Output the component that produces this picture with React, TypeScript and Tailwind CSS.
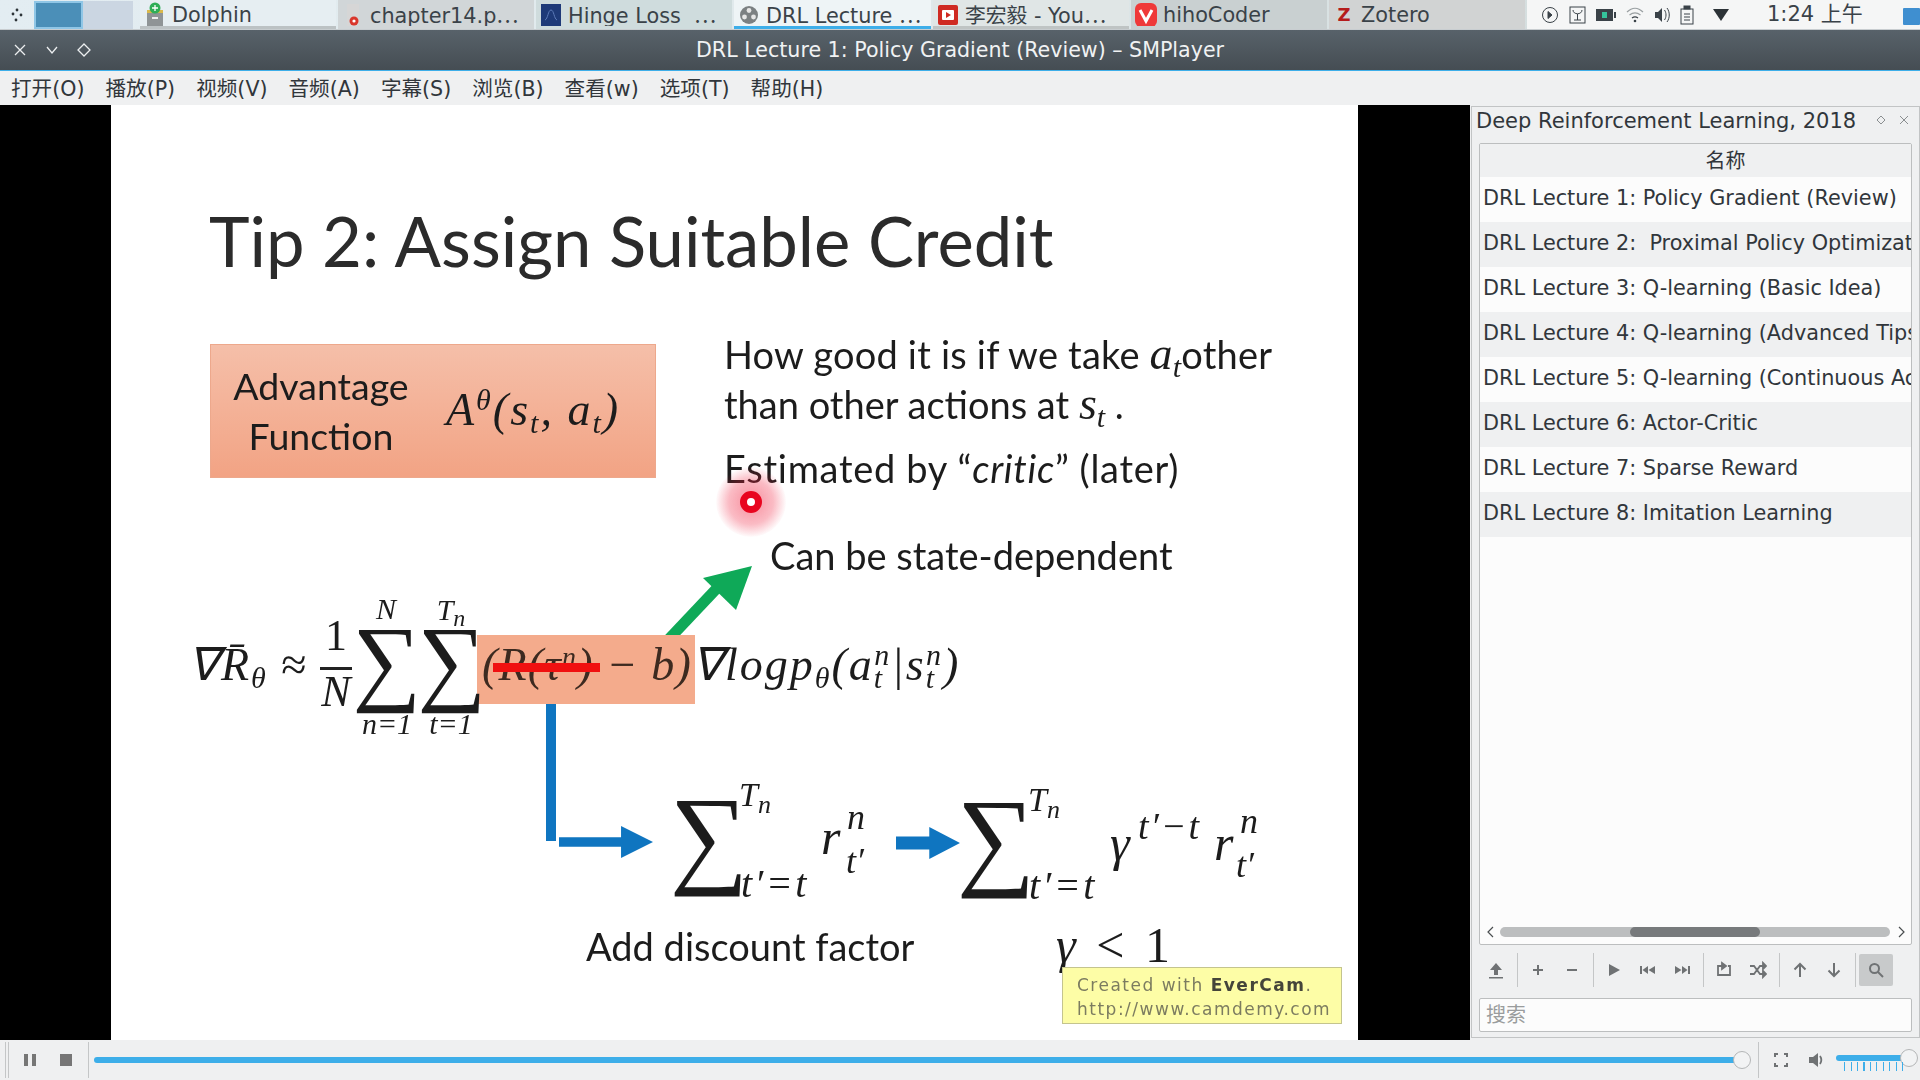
import React from "react";

const rows = [
  "DRL Lecture 1: Policy Gradient (Review)",
  "DRL Lecture 2:  Proximal Policy Optimization (PPO)",
  "DRL Lecture 3: Q-learning (Basic Idea)",
  "DRL Lecture 4: Q-learning (Advanced Tips)",
  "DRL Lecture 5: Q-learning (Continuous Action)",
  "DRL Lecture 6: Actor-Critic",
  "DRL Lecture 7: Sparse Reward",
  "DRL Lecture 8: Imitation Learning",
];
const menus = ["打开(O)", "播放(P)", "视频(V)", "音频(A)", "字幕(S)", "浏览(B)", "查看(w)", "选项(T)", "帮助(H)"];

function Tab({ w, bg, line, icon, text, dots }: { w: string; bg: string; line: string; icon: React.ReactNode; text: string; dots?: boolean }) {
  return (
    <div className={`${w} ${bg} h-[29px] mr-[2px] flex items-center relative overflow-hidden shrink-0`}>
      <div className="w-[30px] h-[24px] flex items-center justify-center shrink-0">{icon}</div>
      <span className="text-[20.800px] leading-[28px] whitespace-pre text-[#3a4248] ml-[2px]">
        {text}
        {dots ? <span className="font-['Noto_Sans_CJK_SC',sans-serif]">⋯</span> : null}
      </span>
      <div className={`absolute left-0 right-0 bottom-0 h-[3px] ${line}`} />
    </div>
  );
}

function Btn({ children, active }: { children: React.ReactNode; active?: boolean }) {
  return (
    <div className={`w-[34px] h-[32px] flex items-center justify-center rounded-[2px] ${active ? "bg-[#c8cacb]" : ""}`}>
      {children}
    </div>
  );
}
const Sep = () => <div className="w-px h-[34px] bg-[#c4c6c7] ml-[4px] mr-[3px]" />;

function Ico({ children, size = 18 }: { children: React.ReactNode; size?: number }) {
  return (
    <svg width={size} height={size} viewBox="0 0 18 18" fill="#6f7274" stroke="none">
      {children}
    </svg>
  );
}

const Arrow = ({ cls, d }: { cls: string; d: string }) => (
  <svg className={cls} viewBox="0 0 100 40" preserveAspectRatio="none">
    <path d={d} fill="#0f75c0" />
  </svg>
);

export default function App() {
  return (
    <div className="w-[1920px] h-[1080px] overflow-hidden flex flex-col bg-[#eff0f1] font-['DejaVu_Sans','Noto_Sans_CJK_SC',sans-serif]">
      {/* task bar */}
      <div className="h-[30px] flex items-start bg-gradient-to-r from-[#e3edf2] via-[#dfe8ea] to-[#cfd8d8] shrink-0 border-b border-[#c8cdd0]">
        <div className="w-[34px] h-[29px] flex items-center justify-center">
          <svg width="18" height="18" viewBox="0 0 18 18" fill="#2d3438">
            <circle cx="5" cy="8" r="1.4" />
            <circle cx="9" cy="4" r="1.4" />
            <circle cx="13" cy="9" r="1.4" />
            <circle cx="8" cy="14" r="1.4" />
          </svg>
        </div>
        <div className="w-[49px] h-[28px] bg-[#4b8fb8] border-2 border-[#8fc6e6] mt-[1px] shrink-0" />
        <div className="w-[50px] h-[28px] bg-[#cbd6e2] mt-[1px] shrink-0 mr-[7px]" />
        <Tab
          w="w-[196px]"
          bg="bg-[#e6eef2]"
          line="bg-[#bcc2c4]"
          text="Dolphin"
          icon={
            <svg width="20" height="26" viewBox="0 0 20 26">
              <rect x="2" y="9" width="16" height="16" fill="#8f9496" />
              <rect x="7" y="15" width="6" height="2" fill="#eee" />
              <rect x="2" y="8" width="16" height="3" fill="#d9b84a" />
              <circle cx="10" cy="6" r="5.5" fill="#2fae57" />
              <path d="M10 3v6M7 6h6" stroke="#fff" strokeWidth="1.3" />
            </svg>
          }
        />
        <Tab
          w="w-[196px]"
          bg="bg-[#d1d6d8]"
          line="bg-[#d1d6d8]"
          text="chapter14.p"
          dots
          icon={
            <svg width="20" height="26" viewBox="0 0 20 26">
              <rect x="4" y="2" width="12" height="22" fill="#d6d6d6" />
              <circle cx="11" cy="19" r="4.5" fill="#d9362b" />
              <circle cx="11" cy="19" r="1.6" fill="#fff" />
            </svg>
          }
        />
        <Tab
          w="w-[196px]"
          bg="bg-[#cfdcdd]"
          line="bg-[#cfdcdd]"
          text="Hinge Loss  "
          dots
          icon={
            <svg width="20" height="22" viewBox="0 0 20 22">
              <rect width="20" height="22" fill="#1e3a78" />
              <path d="M4 16c3-1 3-10 6-10s3 9 6 10" stroke="#5c7bb8" fill="none" />
            </svg>
          }
        />
        <Tab
          w="w-[197px]"
          bg="bg-[#eef4f6]"
          line="bg-[#3daee9]"
          text="DRL Lecture "
          dots
          icon={
            <svg width="20" height="20" viewBox="0 0 20 20">
              <circle cx="10" cy="10" r="9" fill="#7b8082" />
              <circle cx="10" cy="5.5" r="2.4" fill="#e6e6e6" />
              <circle cx="5.5" cy="12" r="2.4" fill="#e6e6e6" />
              <circle cx="14.5" cy="12" r="2.4" fill="#e6e6e6" />
            </svg>
          }
        />
        <Tab
          w="w-[196px]"
          bg="bg-[#e0e6e6]"
          line="bg-[#bfc4c4]"
          text="李宏毅 - You"
          dots
          icon={
            <svg width="20" height="20" viewBox="0 0 20 20">
              <rect width="20" height="20" rx="2" fill="#cf2a22" />
              <rect x="4" y="5" width="12" height="10" rx="1" fill="#fff" />
              <path d="M8 7l5 3-5 3z" fill="#cf2a22" />
            </svg>
          }
        />
        <Tab
          w="w-[196px]"
          bg="bg-[#c9d0d1]"
          line="bg-[#c9d0d1]"
          text="hihoCoder"
          icon={
            <svg width="22" height="24" viewBox="0 0 22 24">
              <rect width="22" height="24" rx="6" fill="#ef3939" />
              <path d="M5 7l6 11 6-11" stroke="#fff" strokeWidth="3" fill="none" />
            </svg>
          }
        />
        <Tab
          w="w-[196px]"
          bg="bg-[#d1d3d3]"
          line="bg-[#d1d3d3]"
          text="Zotero"
          icon={<span className="text-[18px] font-bold leading-none text-[#b51c1c]">Z</span>}
        />
        <div className="flex-1 h-[29px] bg-[#f5f6f6] flex items-center relative text-[#3a4248]">
          <div className="absolute left-[14px] top-[5px] flex gap-[10px] items-center">
            <svg width="18" height="18" viewBox="0 0 18 18" fill="none" stroke="#3a4248">
              <circle cx="9" cy="9" r="7.5" />
              <path d="M7 5.5l4 3.5-4 3.5z" fill="#3a4248" />
            </svg>
            <svg width="17" height="18" viewBox="0 0 17 18" fill="none" stroke="#3a4248">
              <rect x="1" y="1" width="15" height="16" />
              <path d="M4 4c0 5 9 5 9 0M8.500 8v6M5 14h7" />
            </svg>
            <svg width="20" height="16" viewBox="0 0 20 16">
              <rect x="0" y="2" width="17" height="12" fill="#3a4248" />
              <rect x="18" y="5" width="2" height="6" fill="#3a4248" />
              <rect x="6" y="5" width="5" height="6" fill="#35c49c" />
            </svg>
            <svg width="18" height="18" viewBox="0 0 18 18" fill="none" stroke="#9aa0a2" strokeWidth="1.2">
              <path d="M1 6c5-5 11-5 16 0M3.500 9c4-3 7-3 11 0" />
              <path d="M6 12c2-1.500 4-1.500 6 0" stroke="#3a4248" />
              <circle cx="9" cy="15" r="1.300" fill="#3a4248" stroke="none" />
            </svg>
            <svg width="16" height="20" viewBox="0 0 16 20" fill="#3a4248">
              <path d="M1 7h3l4-4v14l-4-4H1z" />
              <path d="M10.500 5c2 3 2 7 0 10M13 3c3 4 3 10 0 14" fill="none" stroke="#3a4248" />
            </svg>
            <svg width="14" height="20" viewBox="0 0 14 20" fill="none" stroke="#3a4248">
              <rect x="1" y="4" width="12" height="15" />
              <rect x="4" y="1" width="6" height="3" fill="#3a4248" />
              <path d="M4 9h6M4 12h6M4 15h6" />
            </svg>
            <svg className="ml-[9px]" width="16" height="12" viewBox="0 0 16 12" fill="#2c3337">
              <path d="M0 0h16L8 12z" />
            </svg>
          </div>
          <span className="absolute left-[240px] top-0 text-[21px] leading-[29px] whitespace-nowrap">1:24 上午</span>
          <div className="absolute right-0 top-[8px] w-[17px] h-[17px] bg-[#3f8fd0] rounded-[1px]" />
        </div>
      </div>

      {/* title bar */}
      <div className="h-[41px] shrink-0 bg-gradient-to-b from-[#58626a] to-[#454d53] border-b border-[#3daee9] flex items-center relative">
        <div className="flex items-center gap-[18px] pl-[13px] text-[#eceff0]">
          <svg width="14" height="14" viewBox="0 0 14 14" stroke="#eceff0" strokeWidth="1.300">
            <path d="M2 2l10 10M12 2L2 12" />
          </svg>
          <svg width="14" height="14" viewBox="0 0 14 14" stroke="#eceff0" strokeWidth="1.300" fill="none">
            <path d="M2 4l5 6 5-6" />
          </svg>
          <svg width="14" height="14" viewBox="0 0 14 14" stroke="#eceff0" strokeWidth="1.300" fill="none">
            <path d="M7 1l6 6-6 6-6-6z" />
          </svg>
        </div>
        <div className="absolute inset-0 flex items-center justify-center pt-px text-[#f0f2f3] text-[20.600px] leading-none whitespace-nowrap">
          DRL Lecture 1: Policy Gradient (Review) – SMPlayer
        </div>
      </div>

      {/* menu */}
      <div className="h-[34px] shrink-0 flex items-center pl-[11px] pt-[2px] gap-[21px] text-[20.600px] text-[#31363b] whitespace-nowrap">
        {menus.map((m) => (
          <span key={m}>{m}</span>
        ))}
      </div>

      {/* main */}
      <div className="h-[935px] shrink-0 flex">
        <div className="w-[1470px] h-full bg-black pl-[111px] pr-[112px] shrink-0">
          <div className="w-[1247px] h-full bg-white relative overflow-hidden">
            <div className="absolute left-[-111px] top-[-105px] w-[1470px] h-[1040px] blur-[0.6px] text-[#1c1c1c] font-['Lato',sans-serif]">
              <div className="absolute left-[209px] top-[197px] text-[68.800px] leading-[88px] whitespace-nowrap text-[#2b2b2b]">
                Tip 2: Assign Suitable Credit
              </div>

              {/* advantage box */}
              <div className="absolute left-[210px] top-[344px] w-[446px] h-[134px] bg-gradient-to-b from-[#f5bfa9] to-[#f2a384] border border-[#eda88c]" />
              <div className="absolute left-[231px] top-[361px] w-[180px] text-center text-[37.500px] leading-[50px]">
                Advantage
                <br />
                Function
              </div>
              <div className="absolute left-[446px] top-[385px] text-[46px] leading-[50px] italic tracking-[2px] whitespace-nowrap font-['Liberation_Serif',serif]">
                A<sup className="text-[30px]">θ</sup>(s<sub className="text-[30px]">t</sub>, a<sub className="text-[30px]">t</sub>)
              </div>

              <div className="absolute left-[724px] top-[329px] text-[38px] leading-[50px] tracking-[0.2px] whitespace-nowrap">
                How good it is if we take <i className="text-[46px] leading-[50px] font-['Liberation_Serif',serif]">a<sub className="text-[30px]">t</sub></i>other
              </div>
              <div className="absolute left-[724px] top-[379px] text-[38px] leading-[50px] whitespace-nowrap">
                than other actions at <i className="text-[46px] leading-[50px] font-['Liberation_Serif',serif]">s<sub className="text-[30px]">t</sub></i> .
              </div>
              <div className="absolute left-[724px] top-[443px] text-[38px] leading-[50px] tracking-[0.7px] whitespace-nowrap">
                Estimated by “<i>critic</i>” (later)
              </div>
              <div className="absolute left-[770px] top-[530px] text-[38px] leading-[50px] whitespace-nowrap">
                Can be state-dependent
              </div>

              {/* green arrow */}
              <svg className="absolute left-[660px] top-[560px] w-[100px] h-[85px]" viewBox="0 0 100 85">
                <path d="M8 80L60 25" stroke="#0fa958" strokeWidth="11" />
                <path d="M92 6L43 18L76 50Z" fill="#0fa958" />
              </svg>

              {/* formula */}
              <div className="absolute left-[477px] top-[635px] w-[218px] h-[69px] bg-[#f4ab8c]" />
              <div className="absolute left-[188px] top-[640px] text-[46px] leading-[50px] italic tracking-[2px] whitespace-nowrap font-['Liberation_Serif',serif]">
                ∇R̄<sub className="text-[30px]">θ</sub> <span className="not-italic">≈</span>
              </div>
              <div className="absolute left-[318px] top-[614px] w-[36px] text-center text-[44px] leading-[44px] font-['Liberation_Serif',serif]">1</div>
              <div className="absolute left-[320px] top-[667px] w-[32px] h-[3px] bg-[#222]" />
              <div className="absolute left-[318px] top-[670px] w-[36px] text-center text-[44px] leading-[44px] italic font-['Liberation_Serif',serif]">N</div>
              <div className="absolute left-[347px] top-[606px] w-[80px] text-center text-[96px] leading-[110px] font-['Liberation_Serif',serif]">∑</div>
              <div className="absolute left-[412px] top-[606px] w-[80px] text-center text-[96px] leading-[110px] font-['Liberation_Serif',serif]">∑</div>
              <div className="absolute left-[366px] top-[593px] w-[40px] text-center text-[30px] leading-[32px] italic font-['Liberation_Serif',serif]">N</div>
              <div className="absolute left-[431px] top-[594px] w-[40px] text-center text-[30px] leading-[32px] italic font-['Liberation_Serif',serif]">
                T<sub className="text-[24px]">n</sub>
              </div>
              <div className="absolute left-[355px] top-[708px] w-[64px] text-center text-[30px] leading-[32px] italic whitespace-nowrap font-['Liberation_Serif',serif]">n=1</div>
              <div className="absolute left-[421px] top-[708px] w-[60px] text-center text-[30px] leading-[32px] italic whitespace-nowrap font-['Liberation_Serif',serif]">t=1</div>
              <div className="absolute left-[482px] top-[640px] text-[46px] leading-[50px] italic tracking-[1.200px] whitespace-nowrap text-[#3d2a20] font-['Liberation_Serif',serif]">
                (R(τ<sup className="text-[28px]">n</sup>) − b)
              </div>
              <div className="absolute left-[493px] top-[663px] w-[107px] h-[9px] bg-[#f01010]" />
              <div className="absolute left-[692px] top-[640px] text-[46px] leading-[50px] italic tracking-[2px] whitespace-nowrap font-['Liberation_Serif',serif]">
                ∇logp<sub className="text-[30px]">θ</sub>(a<sub className="text-[30px]">t</sub>
                <sup className="text-[30px] -ml-[10px]">n</sup>|s<sub className="text-[30px]">t</sub>
                <sup className="text-[30px] -ml-[10px]">n</sup>)
              </div>

              {/* blue connector */}
              <div className="absolute left-[546px] top-[704px] w-[10px] h-[137px] bg-[#0f75c0]" />
              <Arrow cls="absolute left-[559px] top-[826px] w-[94px] h-[32px]" d="M0 14H66V0L100 20L66 40V26H0Z" />
              <Arrow cls="absolute left-[896px] top-[827px] w-[64px] h-[32px]" d="M0 12H52V0L100 20L52 40V28H0Z" />

              <div className="absolute left-[664px] top-[774px] w-[90px] text-center text-[110px] leading-[124px] font-['Liberation_Serif',serif]">∑</div>
              <div className="absolute left-[739px] top-[778px] text-[34px] leading-[34px] italic font-['Liberation_Serif',serif]">
                T<sub className="text-[26px]">n</sub>
              </div>
              <div className="absolute left-[741px] top-[866px] text-[40px] leading-[36px] italic tracking-[2.500px] whitespace-nowrap font-['Liberation_Serif',serif]">t′=t</div>
              <div className="absolute left-[821px] top-[814px] text-[50px] leading-[46px] italic font-['Liberation_Serif',serif]">r</div>
              <div className="absolute left-[847px] top-[800px] text-[36px] leading-[34px] italic font-['Liberation_Serif',serif]">n</div>
              <div className="absolute left-[846px] top-[844px] text-[36px] leading-[34px] italic font-['Liberation_Serif',serif]">t′</div>

              <div className="absolute left-[951px] top-[776px] w-[90px] text-center text-[110px] leading-[124px] font-['Liberation_Serif',serif]">∑</div>
              <div className="absolute left-[1028px] top-[783px] text-[34px] leading-[34px] italic font-['Liberation_Serif',serif]">
                T<sub className="text-[26px]">n</sub>
              </div>
              <div className="absolute left-[1029px] top-[868px] text-[40px] leading-[36px] italic tracking-[2.500px] whitespace-nowrap font-['Liberation_Serif',serif]">t′=t</div>
              <div className="absolute left-[1110px] top-[820px] text-[50px] leading-[46px] italic font-['Liberation_Serif',serif]">γ</div>
              <div className="absolute left-[1138px] top-[808px] text-[38px] leading-[36px] italic tracking-[2px] whitespace-nowrap font-['Liberation_Serif',serif]">t′−t</div>
              <div className="absolute left-[1214px] top-[820px] text-[50px] leading-[46px] italic font-['Liberation_Serif',serif]">r</div>
              <div className="absolute left-[1240px] top-[804px] text-[36px] leading-[34px] italic font-['Liberation_Serif',serif]">n</div>
              <div className="absolute left-[1236px] top-[848px] text-[36px] leading-[34px] italic font-['Liberation_Serif',serif]">t′</div>

              <div className="absolute left-[586px] top-[921px] text-[38px] leading-[50px] whitespace-nowrap">Add discount factor</div>
              <div className="absolute left-[1056px] top-[920px] text-[50px] leading-[50px] tracking-[4px] whitespace-nowrap font-['Liberation_Serif',serif]">
                <i>γ</i> &lt; 1
              </div>

              {/* watermark */}
              <div className="absolute left-[1062px] top-[967px] w-[280px] h-[57px] bg-[#fdfda6] border border-[#c4c48e] pl-[14px] pt-[5px] text-[17px] leading-[24px] tracking-[1.500px] text-[#7c7c60] whitespace-nowrap font-['DejaVu_Sans',sans-serif]">
                Created with <b className="text-[#45453a]">EverCam</b>.
                <br />
                http://www.camdemy.com
              </div>

              {/* pointer */}
              <div className="absolute left-[716px] top-[467px] w-[70px] h-[70px] rounded-full bg-[radial-gradient(circle,rgba(240,30,60,0.5)_0%,rgba(240,30,60,0.3)_45%,rgba(240,30,60,0)_72%)]" />
              <div className="absolute left-[740px] top-[491px] w-[22px] h-[22px] rounded-full border-[7px] border-[#e8051f] bg-white" />
            </div>
          </div>
        </div>

        {/* dock */}
        <div className="flex-1 mt-[1px] mb-[2px] ml-px mr-0 border border-[#c2c4c5] flex flex-col px-[7px] min-w-0">
          <div className="h-[35px] shrink-0 relative -ml-px -mt-[3px] flex items-center text-[21px] text-[#31363b] whitespace-nowrap">
            <span className="-ml-[2px]">Deep Reinforcement Learning, 2018</span>
            <svg className="absolute left-[398px] top-[11px]" width="10" height="10" viewBox="0 0 10 10" fill="none" stroke="#8a8e90">
              <path d="M5 1l4 4-4 4-4-4z" />
            </svg>
            <svg className="absolute left-[421px] top-[11px]" width="10" height="10" viewBox="0 0 10 10" stroke="#8a8e90">
              <path d="M1 1l8 8M9 1l-8 8" />
            </svg>
          </div>
          <div className="h-[802px] shrink-0 mt-[4px] border border-[#bcbebf] rounded-[2px] bg-[#fcfcfc] flex flex-col overflow-hidden">
            <div className="h-[34px] shrink-0 bg-[#eff0f1] border-b border-[#d4d6d7] flex items-center justify-center pl-[60px] text-[20px] text-[#31363b]">名称</div>
            <div className="flex-1 overflow-hidden -mt-px">
              {rows.map((r, i) => (
                <div
                  key={r}
                  className={`h-[45px] flex items-center pl-[3px] text-[20.800px] text-[#31363b] whitespace-pre ${i % 2 === 1 ? "bg-[#eff0f1]" : "bg-[#fcfcfc]"}`}
                >
                  <span className="-translate-y-px">{r}</span>
                </div>
              ))}
            </div>
            <div className="h-[14px] shrink-0 flex items-center relative mb-[5px]">
              <svg className="ml-[6px]" width="10" height="12" viewBox="0 0 10 12" fill="none" stroke="#4a4e50" strokeWidth="1.200">
                <path d="M7 1L2 6l5 5" />
              </svg>
              <div className="ml-[4px] w-[390px] h-[10px] rounded-full bg-[#bcbebf] relative">
                <div className="absolute left-[130px] top-0 w-[130px] h-[10px] rounded-full bg-[#777a7c]" />
              </div>
              <svg className="ml-[6px]" width="10" height="12" viewBox="0 0 10 12" fill="none" stroke="#4a4e50" strokeWidth="1.200">
                <path d="M3 1l5 5-5 5" />
              </svg>
            </div>
          </div>
          <div className="h-[36px] mt-[7px] shrink-0 flex items-center">
            <Btn>
              <Ico size={18}>
                <path d="M9 2l6 7h-4v5H7V9H3zM2 16h14v1.500H2z" />
              </Ico>
            </Btn>
            <Sep />
            <Btn>
              <Ico><path d="M8 4h2v4h4v2h-4v4H8v-4H4V8h4z" /></Ico>
            </Btn>
            <Btn>
              <Ico><path d="M4 8h10v2H4z" /></Ico>
            </Btn>
            <Sep />
            <Btn>
              <Ico><path d="M4 3l11 6-11 6z" /></Ico>
            </Btn>
            <Btn>
              <Ico><path d="M1 5h2v8H1zM9 5v8L3.500 9zM16 5v8L9.500 9z" /></Ico>
            </Btn>
            <Btn>
              <Ico><path d="M15 5h2v8h-2zM9 5v8l5.500-4zM2 5v8l6.500-4z" /></Ico>
            </Btn>
            <Sep />
            <Btn>
              <svg width="18" height="18" viewBox="0 0 18 18" fill="none" stroke="#6f7274" strokeWidth="1.800">
                <path d="M7 5H3v9h12V5h-2" />
                <path d="M7 2l4 3-4 3z" fill="#6f7274" />
              </svg>
            </Btn>
            <Btn>
              <svg width="18" height="18" viewBox="0 0 18 18" fill="none" stroke="#6f7274" strokeWidth="1.800">
                <path d="M1 5h4l6 8h3M1 13h4l6-8h3" />
                <path d="M14 2l3 3-3 3zM14 10l3 3-3 3z" fill="#6f7274" />
              </svg>
            </Btn>
            <Sep />
            <Btn>
              <svg width="18" height="18" viewBox="0 0 18 18" fill="none" stroke="#6f7274" strokeWidth="2">
                <path d="M9 16V3M3.500 8.500L9 3l5.500 5.500" />
              </svg>
            </Btn>
            <Btn>
              <svg width="18" height="18" viewBox="0 0 18 18" fill="none" stroke="#6f7274" strokeWidth="2">
                <path d="M9 2v13M3.500 9.500L9 15l5.500-5.500" />
              </svg>
            </Btn>
            <Sep />
            <Btn active>
              <svg width="18" height="18" viewBox="0 0 18 18" fill="none" stroke="#6f7274" strokeWidth="2">
                <circle cx="7.500" cy="7.500" r="4.500" />
                <path d="M11 11l5 5" />
              </svg>
            </Btn>
          </div>
          <div className="h-[34px] mt-[10px] shrink-0 border border-[#bcbebf] rounded-[2px] bg-[#fcfcfc] flex items-center pl-[6px] text-[20px] text-[#9a9c9d]">
            搜索
          </div>
        </div>
      </div>

      {/* bottom controls */}
      <div className="h-[40px] shrink-0 flex items-center relative">
        <div className="w-px h-[36px] bg-[#c4c6c7] ml-[5px]" />
        <div className="w-px h-[36px] bg-[#c4c6c7] ml-[2px]" />
        <div className="w-[34px] flex justify-center ml-[4px]">
          <svg width="12" height="12" viewBox="0 0 12 12" fill="#767676">
            <path d="M0 0h4v12H0zM8 0h4v12H8z" />
          </svg>
        </div>
        <div className="w-[12px] h-[12px] bg-[#767676] ml-[13px]" />
        <div className="w-px h-[36px] bg-[#c4c6c7] ml-[16px]" />
        <div className="w-[1648px] h-[6px] bg-[#3daee9] rounded-full ml-[5px] relative">
          <div className="absolute right-[-9px] top-[-6px] w-[18px] h-[18px] rounded-full bg-[#f2f3f4] border border-[#b4b6b7]" />
        </div>
        <div className="w-px h-[36px] bg-[#c4c6c7] ml-[16px]" />
        <div className="w-[44px] flex justify-center">
          <svg width="14" height="14" viewBox="0 0 14 14" fill="none" stroke="#6f7274" strokeWidth="2">
            <path d="M1 4V1h3M10 1h3v3M13 10v3h-3M4 13H1v-3" />
          </svg>
        </div>
        <div className="w-[28px] flex justify-center">
          <svg width="16" height="16" viewBox="0 0 16 16" fill="#6f7274">
            <path d="M0 5h4l5-4v14l-5-4H0z" />
            <path d="M11 4c2 3 2 5 0 8" fill="none" stroke="#6f7274" strokeWidth="1.800" />
          </svg>
        </div>
        <div className="w-[72px] ml-[5px] relative h-[30px]">
          <div className="absolute left-0 top-[10px] w-[70px] h-[6px] rounded-full bg-[#3daee9]" />
          <div className="absolute right-[-10px] top-[4px] w-[18px] h-[18px] rounded-full bg-[#f2f3f4] border border-[#b4b6b7]" />
          <div className="absolute left-[8px] top-[17px] w-[64px] h-[9px] bg-[repeating-linear-gradient(90deg,#3daee9_0,#3daee9_1px,transparent_1px,transparent_6.500px)]" />
        </div>
      </div>
    </div>
  );
}
